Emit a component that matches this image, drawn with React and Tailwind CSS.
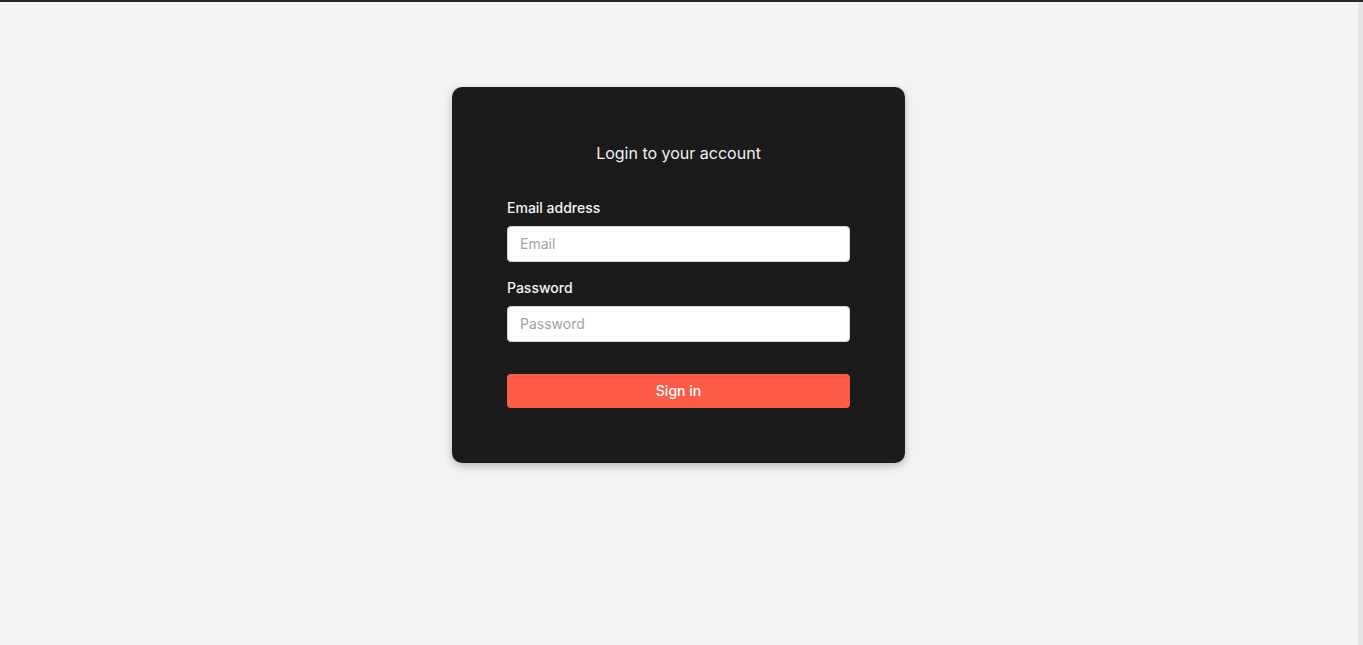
import React from "react";

const App = () => {
  return (
    <div
      className="w-full h-[645px] bg-[#f4f4f4] flex flex-col"
      style={{ fontFamily: "Inter, 'Noto Sans', sans-serif" }}
    >
      {/* top rule */}
      <div className="h-[2px] w-full bg-[#262626]" />

      <div className="flex flex-1">
        <div className="flex-1 flex justify-center pt-[85px] pr-[1px]">
          {/* Login card */}
          <div className="w-[453px] h-[376px] bg-[#1b1b1b] rounded-[10px] shadow-[0_3px_8px_rgba(0,0,0,0.25)] px-[55px] pt-[54px]">
            <h1 className="text-[16px] leading-6 text-center text-[#f2f2f2] font-normal">
              Login to your account
            </h1>

            <form className="mt-[33px]" onSubmit={(e) => e.preventDefault()}>
              <label className="block text-[14px] leading-5 font-medium text-[#f5f5f5] mt-[1px] mb-[8px]">
                Email address
              </label>
              <input
                type="email"
                placeholder="Email"
                className="block w-full h-[36px] rounded-[4px] bg-white border border-[#d4d4d4] px-3 pb-[2px] text-[14px] text-[#222] placeholder:text-[#a3a3a3] outline-none"
              />

              <label className="block text-[14px] leading-5 font-medium text-[#f5f5f5] mt-[16px] mb-[8px]">
                Password
              </label>
              <input
                type="password"
                placeholder="Password"
                className="block w-full h-[36px] rounded-[4px] bg-white border border-[#d4d4d4] px-3 pb-[2px] text-[14px] text-[#222] placeholder:text-[#a3a3a3] outline-none"
              />

              <button
                type="submit"
                className="mt-[32px] w-full h-[34px] rounded-[4px] bg-[#fc5c48] text-white text-[14px] font-medium pb-[2px]"
              >
                Sign in
              </button>
            </form>
          </div>
        </div>
        {/* scrollbar strip */}
        <div className="w-[5px] bg-[#e6e6e6]" />
      </div>
    </div>
  );
};

export default App;
